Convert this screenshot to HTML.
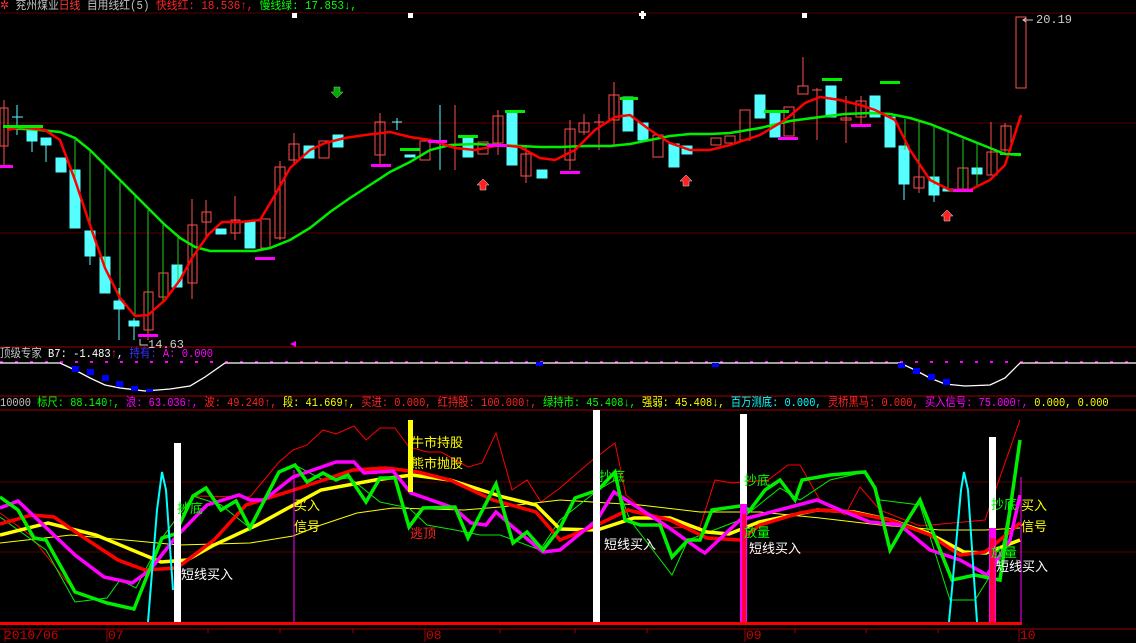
<!DOCTYPE html>
<html><head><meta charset="utf-8"><style>
body{margin:0;background:#000;width:1136px;height:642px;overflow:hidden;position:relative;font-family:"Liberation Mono","Noto Sans CJK SC",monospace;font-size:12px}
.t{position:absolute;white-space:pre;line-height:13px}
.s{transform-origin:0 0}
.l{position:absolute;white-space:pre;font-family:"Liberation Sans","Noto Sans CJK SC",sans-serif;font-size:13px;line-height:14px}
svg{position:absolute;left:0;top:0}
</style></head><body>
<svg width="1136" height="642" viewBox="0 0 1136 642">
<g stroke="#5a0000" stroke-width="1">
<line x1="0" y1="13" x2="1136" y2="13"/><line x1="0" y1="123" x2="1136" y2="123"/><line x1="0" y1="233" x2="1136" y2="233"/>
<line x1="0" y1="482" x2="1136" y2="482"/><line x1="0" y1="552" x2="1136" y2="552"/>
</g>
<g stroke="#a00000"><line x1="0" y1="347" x2="1136" y2="347"/><line x1="0" y1="396" x2="1136" y2="396"/><line x1="0" y1="410" x2="1136" y2="410"/><line x1="0" y1="629" x2="1136" y2="629"/></g>
<g stroke="#ff5050" fill="none" stroke-width="1">
<line x1="4" y1="100" x2="4" y2="165"/><rect x="0" y="108" width="8" height="38"/>
<rect x="144" y="292" width="9" height="38"/><line x1="148" y1="285" x2="148" y2="340"/>
<rect x="159" y="273" width="9" height="24"/>
<line x1="192" y1="199" x2="192" y2="299"/><rect x="188" y="225" width="9" height="58"/>
<line x1="206" y1="200" x2="206" y2="236"/><rect x="202" y="212" width="9" height="10"/>
<line x1="235" y1="196" x2="235" y2="240"/><rect x="231" y="220" width="9" height="13"/>
<rect x="261" y="219" width="9" height="29"/>
<line x1="280" y1="161" x2="280" y2="240"/><rect x="275" y="167" width="10" height="71"/>
<line x1="294" y1="133" x2="294" y2="164"/><rect x="289" y="144" width="10" height="16"/>
<rect x="319" y="141" width="10" height="17"/>
<line x1="380" y1="113" x2="380" y2="165"/><rect x="375" y="122" width="10" height="33"/>
<rect x="420" y="141" width="10" height="19"/><line x1="455" y1="105" x2="455" y2="170"/>
<rect x="478" y="142" width="10" height="12"/>
<line x1="498" y1="110" x2="498" y2="155"/><rect x="493" y="116" width="10" height="27"/>
<line x1="526" y1="145" x2="526" y2="183"/><rect x="521" y="154" width="10" height="22"/>
<line x1="570" y1="120" x2="570" y2="170"/><rect x="565" y="129" width="10" height="31"/>
<line x1="584" y1="114" x2="584" y2="135"/><rect x="579" y="123" width="10" height="9"/>
<line x1="599" y1="114" x2="599" y2="150"/><line x1="594" y1="122" x2="604" y2="122"/>
<line x1="614" y1="82" x2="614" y2="145"/><rect x="609" y="95" width="10" height="25"/>
<rect x="653" y="135" width="10" height="22"/><rect x="711" y="138" width="10" height="7"/>
<rect x="725" y="136" width="10" height="7"/><rect x="740" y="110" width="10" height="30"/>
<rect x="784" y="107" width="10" height="29"/>
<line x1="803" y1="57" x2="803" y2="86"/><rect x="798" y="86" width="10" height="8"/>
<line x1="817" y1="88" x2="817" y2="140"/><line x1="812" y1="90" x2="822" y2="90"/>
<line x1="846" y1="96" x2="846" y2="143"/><rect x="841" y="118" width="10" height="2"/>
<line x1="861" y1="96" x2="861" y2="125"/><rect x="856" y="101" width="10" height="16"/>
<line x1="919" y1="165" x2="919" y2="193"/><rect x="914" y="177" width="10" height="11"/>
<rect x="958" y="168" width="10" height="21"/>
<line x1="991" y1="122" x2="991" y2="175"/><rect x="987" y="152" width="10" height="23"/>
<line x1="1005" y1="123" x2="1005" y2="155"/><rect x="1001" y="126" width="10" height="24"/>
<rect x="1016" y="17" width="10" height="71"/>
</g>
<g fill="#55ffff" stroke="#55ffff">
<line x1="17" y1="105" x2="17" y2="135"/><line x1="12" y1="117" x2="23" y2="117"/>
<rect x="27" y="129" width="10" height="12"/><line x1="32" y1="140" x2="32" y2="152"/>
<rect x="41" y="138" width="10" height="7"/><line x1="46" y1="145" x2="46" y2="162"/>
<rect x="56" y="158" width="10" height="14"/>
<rect x="70" y="170" width="10" height="58"/>
<rect x="85" y="231" width="10" height="25"/><line x1="90" y1="256" x2="90" y2="265"/>
<rect x="100" y="257" width="10" height="36"/>
<rect x="114" y="301" width="10" height="8"/><line x1="119" y1="288" x2="119" y2="340"/>
<rect x="129" y="321" width="10" height="5"/><line x1="134" y1="318" x2="134" y2="340"/>
<rect x="172" y="265" width="10" height="22"/>
<rect x="216" y="229" width="10" height="5"/>
<rect x="245" y="222" width="10" height="26"/>
<rect x="304" y="146" width="10" height="12"/>
<rect x="333" y="135" width="10" height="12"/>
<line x1="397" y1="118" x2="397" y2="130"/><line x1="392" y1="122" x2="402" y2="122"/>
<rect x="405" y="155" width="10" height="2"/>
<line x1="440" y1="105" x2="440" y2="170"/>
<rect x="463" y="138" width="10" height="19"/>
<rect x="507" y="113" width="10" height="52"/>
<rect x="537" y="170" width="10" height="8"/>
<rect x="623" y="97" width="10" height="34"/><rect x="638" y="123" width="10" height="17"/>
<rect x="669" y="144" width="10" height="23"/><rect x="682" y="146" width="10" height="8"/>
<rect x="755" y="95" width="10" height="23"/><rect x="770" y="113" width="10" height="24"/>
<rect x="826" y="86" width="10" height="31"/><rect x="870" y="96" width="10" height="21"/>
<rect x="885" y="117" width="10" height="30"/><rect x="899" y="146" width="10" height="38"/>
<line x1="904" y1="184" x2="904" y2="200"/>
<rect x="929" y="177" width="10" height="18"/><line x1="934" y1="195" x2="934" y2="202"/>
<rect x="943" y="189" width="10" height="2"/><rect x="972" y="168" width="10" height="6"/>
</g>
<g stroke="#22cc22" stroke-width="1">
<line x1="75" y1="180" x2="75" y2="140"/><line x1="90" y1="225" x2="90" y2="150"/><line x1="105" y1="268" x2="105" y2="165"/><line x1="120" y1="298" x2="120" y2="180"/><line x1="135" y1="316" x2="135" y2="195"/><line x1="148" y1="315" x2="148" y2="210"/><line x1="163" y1="302" x2="163" y2="225"/><line x1="178" y1="282" x2="178" y2="238"/><line x1="192" y1="258" x2="192" y2="247"/>
<line x1="905" y1="150" x2="905" y2="119"/><line x1="919" y1="167" x2="919" y2="121"/><line x1="934" y1="185" x2="934" y2="127"/><line x1="948" y1="190" x2="948" y2="132"/><line x1="963" y1="190" x2="963" y2="139"/><line x1="977" y1="186" x2="977" y2="144"/>
</g>
<polyline fill="none" stroke="#00ee00" stroke-width="2.5" points="7,128 40,130 60,132 75,138 90,150 105,165 120,180 135,195 150,210 165,225 180,238 195,247 210,251 230,251 255,251 270,248 290,240 310,228 330,212 350,198 370,185 390,172 410,162 430,150 450,145 475,144 495,145 520,146 540,147 560,147 585,146 610,146 630,144 650,140 670,136 690,134 710,134 730,133 760,128 790,121 820,117 845,114 870,113 890,114 910,118 930,124 950,132 970,140 990,148 1005,154 1021,155"/>
<polyline fill="none" stroke="#ff0000" stroke-width="2.5" points="7,130 20,127 45,130 60,140 75,180 90,225 105,268 120,298 135,316 148,315 165,300 180,280 192,258 208,235 222,222 240,222 260,220 275,195 290,168 310,150 325,143 345,138 365,135 390,132 410,137 430,140 455,148 475,150 500,145 520,147 540,158 555,160 575,150 595,130 615,117 630,115 650,130 670,143 690,150 710,150 730,145 760,135 785,120 805,103 820,97 840,100 860,105 875,110 895,120 910,150 930,180 950,190 970,190 990,180 1005,165 1021,115"/>
<g fill="#ff00ff">
<rect x="0" y="165" width="13" height="3"/><rect x="138" y="334" width="20" height="3"/><rect x="255" y="257" width="20" height="3"/><rect x="371" y="164" width="20" height="3"/><rect x="428" y="140" width="19" height="3"/><rect x="487" y="144" width="20" height="3"/><rect x="560" y="171" width="20" height="3"/><rect x="778" y="137" width="20" height="3"/><rect x="851" y="124" width="20" height="3"/><rect x="953" y="189" width="20" height="3"/>
</g>
<g fill="#00ee00">
<rect x="3" y="125" width="40" height="3"/><rect x="400" y="148" width="20" height="3"/><rect x="458" y="135" width="20" height="3"/><rect x="505" y="110" width="20" height="3"/><rect x="620" y="97" width="18" height="3"/><rect x="822" y="78" width="20" height="3"/><rect x="880" y="81" width="20" height="3"/><rect x="764" y="110" width="25" height="3"/><rect x="1000" y="153" width="21" height="2"/>
</g>
<path d="M334 87h6v5h3l-6 6-6-6h3z" fill="#00aa00" stroke="#8c8" stroke-width="0.5"/>
<g fill="#ff2020" stroke="#ddd" stroke-width="0.5">
<path d="M480 190h6v-5h3l-6-6-6 6h3z"/><path d="M683 186h6v-5h3l-6-6-6 6h3z"/><path d="M944 221h6v-5h3l-6-6-6 6h3z"/>
</g>
<g fill="#fff"><rect x="292" y="13" width="5" height="5"/><rect x="408" y="13" width="5" height="5"/><rect x="802" y="13" width="5" height="5"/><rect x="641" y="11" width="3" height="8"/><rect x="639" y="13" width="7" height="3"/></g>
<path d="M290 344l6-3v6z" fill="#ff00ff"/>
<path d="M140 339v6h8" stroke="#ccc" fill="none"/>
<path d="M1026 18l-3 2 3 2M1023 20h10" stroke="#ccc" fill="none"/>
<line x1="0" y1="362" x2="1136" y2="362" stroke="#ff00ff" stroke-dasharray="3,12" stroke-width="2"/>
<polyline fill="none" stroke="#fff" stroke-width="1.3" points="0,363 60,363 75,370 90,378 105,385 120,388 145,391 170,389 190,386 205,377 215,370 225,363 900,363 915,370 930,378 945,384 965,386 990,385 1005,378 1020,363 1136,363"/>
<g fill="#0000ff"><rect x="72" y="366" width="7" height="6"/><rect x="87" y="369" width="7" height="6"/><rect x="102" y="375" width="7" height="6"/><rect x="116" y="381" width="7" height="6"/><rect x="131" y="386" width="7" height="5"/><rect x="146" y="389" width="7" height="3"/><rect x="536" y="362" width="7" height="4"/><rect x="712" y="363" width="7" height="4"/><rect x="898" y="363" width="7" height="5"/><rect x="913" y="368" width="7" height="6"/><rect x="928" y="374" width="7" height="6"/><rect x="943" y="379" width="7" height="6"/></g>
<g fill="none">
<polyline stroke="#ff0000" stroke-width="1" points="0,513 30,535 75,592 107,603 134,608 162,538 193,496 250,497 279,462 293,450 307,445 323,430 336,434 354,426 366,440 380,428 395,428 409,447 427,452 441,452 461,463 468,467 482,463 496,433 512,490 527,480 541,502 560,488 590,462 615,443 626,495 665,528 700,527 715,480 732,483 768,480 788,465 800,465 820,500 845,515 860,487 880,510 920,526 985,520 1020,420"/>
<polyline stroke="#ffff00" stroke-width="1" points="0,543 71,535 179,545 250,543 293,536 321,525 357,513 393,508 464,510 500,507 560,500 640,505 700,512 760,512 820,518 880,525 940,530 985,530 1020,528"/>
<polyline stroke="#00ee00" stroke-width="1" points="0,517 46,550 75,602 107,598 120,580 136,588 162,538 193,496 221,505 250,528 279,472 295,465 323,480 350,478 380,502 409,508 427,525 455,530 480,535 500,535 540,550 560,520 598,490 615,480 630,520 672,575 688,540 740,520 780,488 800,500 830,480 865,472 880,500 920,505 950,600 975,600 1000,560 1020,445"/>
<polyline stroke="#ffff00" stroke-width="3.5" points="0,535 48,523 96,535 161,562 187,560 214,545 257,525 321,490 375,480 412,475 450,480 503,497 536,505 560,529 597,530 634,518 670,518 707,532 729,534 759,522 817,510 854,512 891,520 928,533 964,552 986,553 1020,540"/>
<polyline stroke="#ff0000" stroke-width="3.5" points="0,524 32,515 54,517 80,535 118,560 145,570 177,568 214,540 246,505 300,488 353,470 386,468 418,472 450,480 493,500 536,512 560,540 597,525 628,510 670,520 707,538 740,540 760,525 800,513 817,510 850,512 890,520 930,535 960,555 985,552 1000,540 1020,523"/>
<polyline stroke="#ff00ff" stroke-width="3.5" points="0,508 18,501 75,555 104,577 132,583 150,570 175,538 207,505 239,495 250,500 264,500 293,477 336,462 354,462 364,473 393,471 411,493 454,508 471,523 486,525 496,512 514,528 543,552 560,550 597,520 614,492 634,505 665,525 700,550 705,553 740,520 760,515 817,500 840,510 870,522 900,525 930,550 960,560 987,575 1010,540 1020,495"/>
<polyline stroke="#00ee00" stroke-width="3.5" points="0,497 18,510 34,538 46,540 75,592 107,603 134,609 162,538 175,534 193,496 206,488 221,510 236,501 250,528 279,472 295,465 307,482 323,473 336,480 348,475 366,502 380,478 395,478 409,527 423,508 455,507 468,538 496,484 513,543 527,532 543,550 560,528 575,498 598,490 615,472 625,520 640,525 660,525 672,557 688,540 700,540 712,510 740,506 750,510 765,490 780,480 795,500 802,480 830,475 865,472 875,488 890,550 905,524 920,500 952,580 975,575 1000,580 1020,440"/>
<polyline stroke="#00ffff" stroke-width="2" points="148,622 157,510 162,472 166,490 173,590"/>
<polyline stroke="#00ffff" stroke-width="2" points="949,622 961,490 964,472 968,490 977,622"/>
</g>
<line x1="294" y1="470" x2="294" y2="625" stroke="#ff00ff" stroke-width="1"/>
<line x1="1021" y1="477" x2="1021" y2="625" stroke="#ff00ff" stroke-width="1"/>
<rect x="408" y="420" width="5" height="72" fill="#ffff00"/>
<g fill="#fff"><rect x="174" y="443" width="7" height="182"/><rect x="593" y="410" width="7" height="215"/><rect x="740" y="414" width="7" height="211"/><rect x="989" y="437" width="7" height="188"/></g>
<rect x="740" y="504" width="7" height="121" fill="#ff00ff"/><rect x="742" y="514" width="4" height="111" fill="#ff0040"/>
<rect x="989" y="528" width="7" height="97" fill="#ff00ff"/><rect x="990" y="538" width="5" height="87" fill="#ff0040"/>
<rect x="0" y="622" width="1022" height="3" fill="#ff0000"/>
<g stroke="#a00000"><line x1="5" y1="629" x2="5" y2="642"/><line x1="107" y1="629" x2="107" y2="642"/><line x1="425" y1="629" x2="425" y2="642"/><line x1="745" y1="629" x2="745" y2="642"/><line x1="1019" y1="629" x2="1019" y2="642"/>
<line x1="30" y1="629" x2="30" y2="633"/><line x1="208" y1="629" x2="208" y2="633"/><line x1="280" y1="629" x2="280" y2="633"/><line x1="353" y1="629" x2="353" y2="633"/><line x1="500" y1="629" x2="500" y2="633"/><line x1="575" y1="629" x2="575" y2="633"/><line x1="647" y1="629" x2="647" y2="633"/><line x1="795" y1="629" x2="795" y2="633"/><line x1="866" y1="629" x2="866" y2="633"/><line x1="938" y1="629" x2="938" y2="633"/></g>
</svg>
<div class="t s" style="left:0;top:0;transform:scaleX(0.9)"><span style="color:#f33">✲</span> <span style="color:#c0c0c0">兖州煤业</span><span style="color:#f33">日线</span> <span style="color:#c0c0c0">自用线红(5)</span> <span style="color:#f22">快线红: 18.536↑,</span> <span style="color:#0f0">慢线绿: 17.853↓,</span></div>
<div class="t" style="left:148px;top:339px;color:#ccc">14.63</div>
<div class="t" style="left:1036px;top:14px;color:#ccc">20.19</div>
<div class="t s" style="left:0;top:348px;transform:scaleX(0.87)"><span style="color:#c0c0c0">顶级专家</span> <span style="color:#fff">B7: -1.483</span><span style="color:#f33">↑</span><span style="color:#fff">,</span> <span style="color:#33f">持有:</span> <span style="color:#f0f">A: 0.000</span></div>
<div class="t s" style="left:0;top:397px;transform:scaleX(0.86)"><span style="color:#c0c0c0">10000</span> <span style="color:#0f0">标尺: 88.140↑,</span> <span style="color:#f0f">浪: 63.036↑,</span> <span style="color:#f22">波: 49.240↑,</span> <span style="color:#ff0">段: 41.669↑,</span> <span style="color:#f22">买进: 0.000, 红持股: 100.000↑,</span> <span style="color:#0f0">绿持市: 45.408↓,</span> <span style="color:#ff0">强弱: 45.408↓,</span> <span style="color:#0ff">百万测底: 0.000,</span> <span style="color:#f22">灵桥黑马: 0.000,</span> <span style="color:#f0f">买入信号: 75.000↑,</span> <span style="color:#ff0">0.000, 0.000</span></div>
<div class="l" style="left:177px;top:502px;color:#0f0">抄底</div>
<div class="l" style="left:181px;top:568px;color:#fff">短线买入</div>
<div class="l" style="left:294px;top:499px;color:#ff0">买入</div>
<div class="l" style="left:294px;top:520px;color:#ff0">信号</div>
<div class="l" style="left:410px;top:527px;color:#f22">逃顶</div>
<div class="l" style="left:411px;top:436px;color:#ff0">牛市持股</div>
<div class="l" style="left:411px;top:457px;color:#ff0">熊市抛股</div>
<div class="l" style="left:599px;top:470px;color:#0f0">抄底</div>
<div class="l" style="left:604px;top:538px;color:#fff">短线买入</div>
<div class="l" style="left:744px;top:474px;color:#0f0">抄底</div>
<div class="l" style="left:744px;top:526px;color:#0f0">放量</div>
<div class="l" style="left:749px;top:542px;color:#fff">短线买入</div>
<div class="l" style="left:991px;top:498px;color:#0f0">抄底</div>
<div class="l" style="left:1021px;top:499px;color:#ff0">买入</div>
<div class="l" style="left:1021px;top:520px;color:#ff0">信号</div>
<div class="l" style="left:991px;top:546px;color:#0f0">放量</div>
<div class="l" style="left:996px;top:560px;color:#fff">短线买入</div>
<div class="t" style="left:4px;top:629px;color:#c00;font-size:13px">2010/06</div>
<div class="t" style="left:108px;top:629px;color:#c00;font-size:13px">07</div>
<div class="t" style="left:426px;top:629px;color:#c00;font-size:13px">08</div>
<div class="t" style="left:746px;top:629px;color:#c00;font-size:13px">09</div>
<div class="t" style="left:1020px;top:629px;color:#c00;font-size:13px">10</div>
</body></html>
